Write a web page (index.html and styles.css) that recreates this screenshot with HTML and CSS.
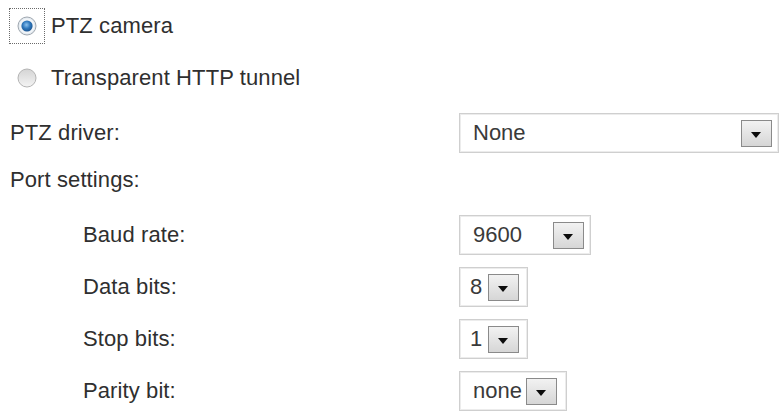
FILE: index.html
```html
<html>

<head>
	<link rel="stylesheet" href="styles.css">
</head>

<body>
	<div id="ptz-form">
		<div class="row">
			<span class="radio-wrap focused">
				<svg class="radio" width="20" height="20" viewBox="0 0 20 20">
					<defs>
						<radialGradient id="dotBlue" cx="45%" cy="40%" r="60%">
							<stop offset="0%" stop-color="#8cc2ee" />
							<stop offset="55%" stop-color="#2f78bd" />
							<stop offset="100%" stop-color="#1c5590" />
						</radialGradient>
					</defs>
					<circle cx="10" cy="10" r="9" fill="#e2e9ef" stroke="#a0a8b0" stroke-width="1" />
					<circle cx="10" cy="10" r="7.6" fill="#f2f5f8" />
					<circle cx="10" cy="10" r="5.6" fill="url(#dotBlue)" />
				</svg>
			</span>
			<span class="label">PTZ camera</span>
		</div>
		<div class="row">
			<span class="radio-wrap">
				<svg class="radio" width="20" height="20" viewBox="0 0 20 20">
					<defs>
						<linearGradient id="greyFill" x1="0" y1="0" x2="0" y2="1">
							<stop offset="0%" stop-color="#d4d4d4" />
							<stop offset="100%" stop-color="#f4f4f4" />
						</linearGradient>
					</defs>
					<circle cx="10" cy="10" r="9" fill="url(#greyFill)" stroke="#b4b4b4" stroke-width="1" />
				</svg>
			</span>
			<span class="label">Transparent HTTP tunnel</span>
		</div>

		<div class="row field driver">
			<span class="label">PTZ driver:</span>
			<div class="select wide">
				<span class="value">None</span>
				<span class="arrow"></span>
			</div>
		</div>

		<div class="row heading">
			<span class="label">Port settings:</span>
		</div>

		<div class="row field sub first">
			<span class="label">Baud rate:</span>
			<div class="select baud">
				<span class="value">9600</span>
				<span class="arrow"></span>
			</div>
		</div>
		<div class="row field sub">
			<span class="label">Data bits:</span>
			<div class="select tiny">
				<span class="value">8</span>
				<span class="arrow"></span>
			</div>
		</div>
		<div class="row field sub">
			<span class="label">Stop bits:</span>
			<div class="select tiny">
				<span class="value">1</span>
				<span class="arrow"></span>
			</div>
		</div>
		<div class="row field sub">
			<span class="label">Parity bit:</span>
			<div class="select parity">
				<span class="value">none</span>
				<span class="arrow"></span>
			</div>
		</div>
	</div>
</body>

</html>
```

FILE: styles.css
```css
body {
	margin: 0;
	background-color: white;
	font-family: "Liberation Sans", Arial, sans-serif;
	font-size: 22px;
	color: #2f2f2f;
}

#ptz-form {
	display: flex;
	flex-direction: column;
	gap: 12px;
	padding: 6px 0 0 9px;
}

#ptz-form .row {
	display: flex;
	align-items: center;
	height: 40px;
}

#ptz-form .label {
	letter-spacing: 0.1px;
}

.radio-wrap {
	width: 34px;
	height: 34px;
	border: 1px dotted transparent;
	display: flex;
	align-items: center;
	justify-content: center;
	margin-right: 6px;
}

.radio-wrap.focused {
	border-color: #6a6a6a;
}

.radio {
	display: block;
}

#ptz-form .field .label {
	width: 449px;
	padding-left: 1px;
}

#ptz-form .driver {
	margin-top: 3px;
}

#ptz-form .heading {
	height: 30px;
}

#ptz-form .heading .label {
	padding-left: 1px;
}

#ptz-form .sub .label {
	width: 376px;
	padding-left: 74px;
}

#ptz-form .sub.first {
	margin-top: 8px;
}

/* fake select boxes */
.select {
	box-sizing: border-box;
	height: 40px;
	border: 1px solid #cfcfcf;
	box-shadow: inset 0 0 0 1px #ececec;
	background-color: white;
	display: flex;
	align-items: center;
	padding: 0 6px 0 13px;
	color: #3a3a3a;
}

.select .value {
	flex: 1;
}

.select .arrow {
	box-sizing: border-box;
	width: 31px;
	height: 27px;
	border: 1px solid #8a8a8a;
	background: linear-gradient(#f2f2f2, #d6d6d6);
	position: relative;
}

.select .arrow::after {
	content: "";
	position: absolute;
	left: 9px;
	top: 11px;
	border-left: 5px solid transparent;
	border-right: 5px solid transparent;
	border-top: 6px solid #0c0c0c;
}

.select.wide {
	width: 320px;
}

.select.baud {
	width: 132px;
}

.select.tiny {
	width: 69px;
	padding-left: 10px;
}

.select.tiny .value {
	flex: none;
	margin-right: 6px;
}

.select.parity {
	width: 108px;
}

.select.parity .value {
	flex: none;
	margin-right: 4px;
}
```
